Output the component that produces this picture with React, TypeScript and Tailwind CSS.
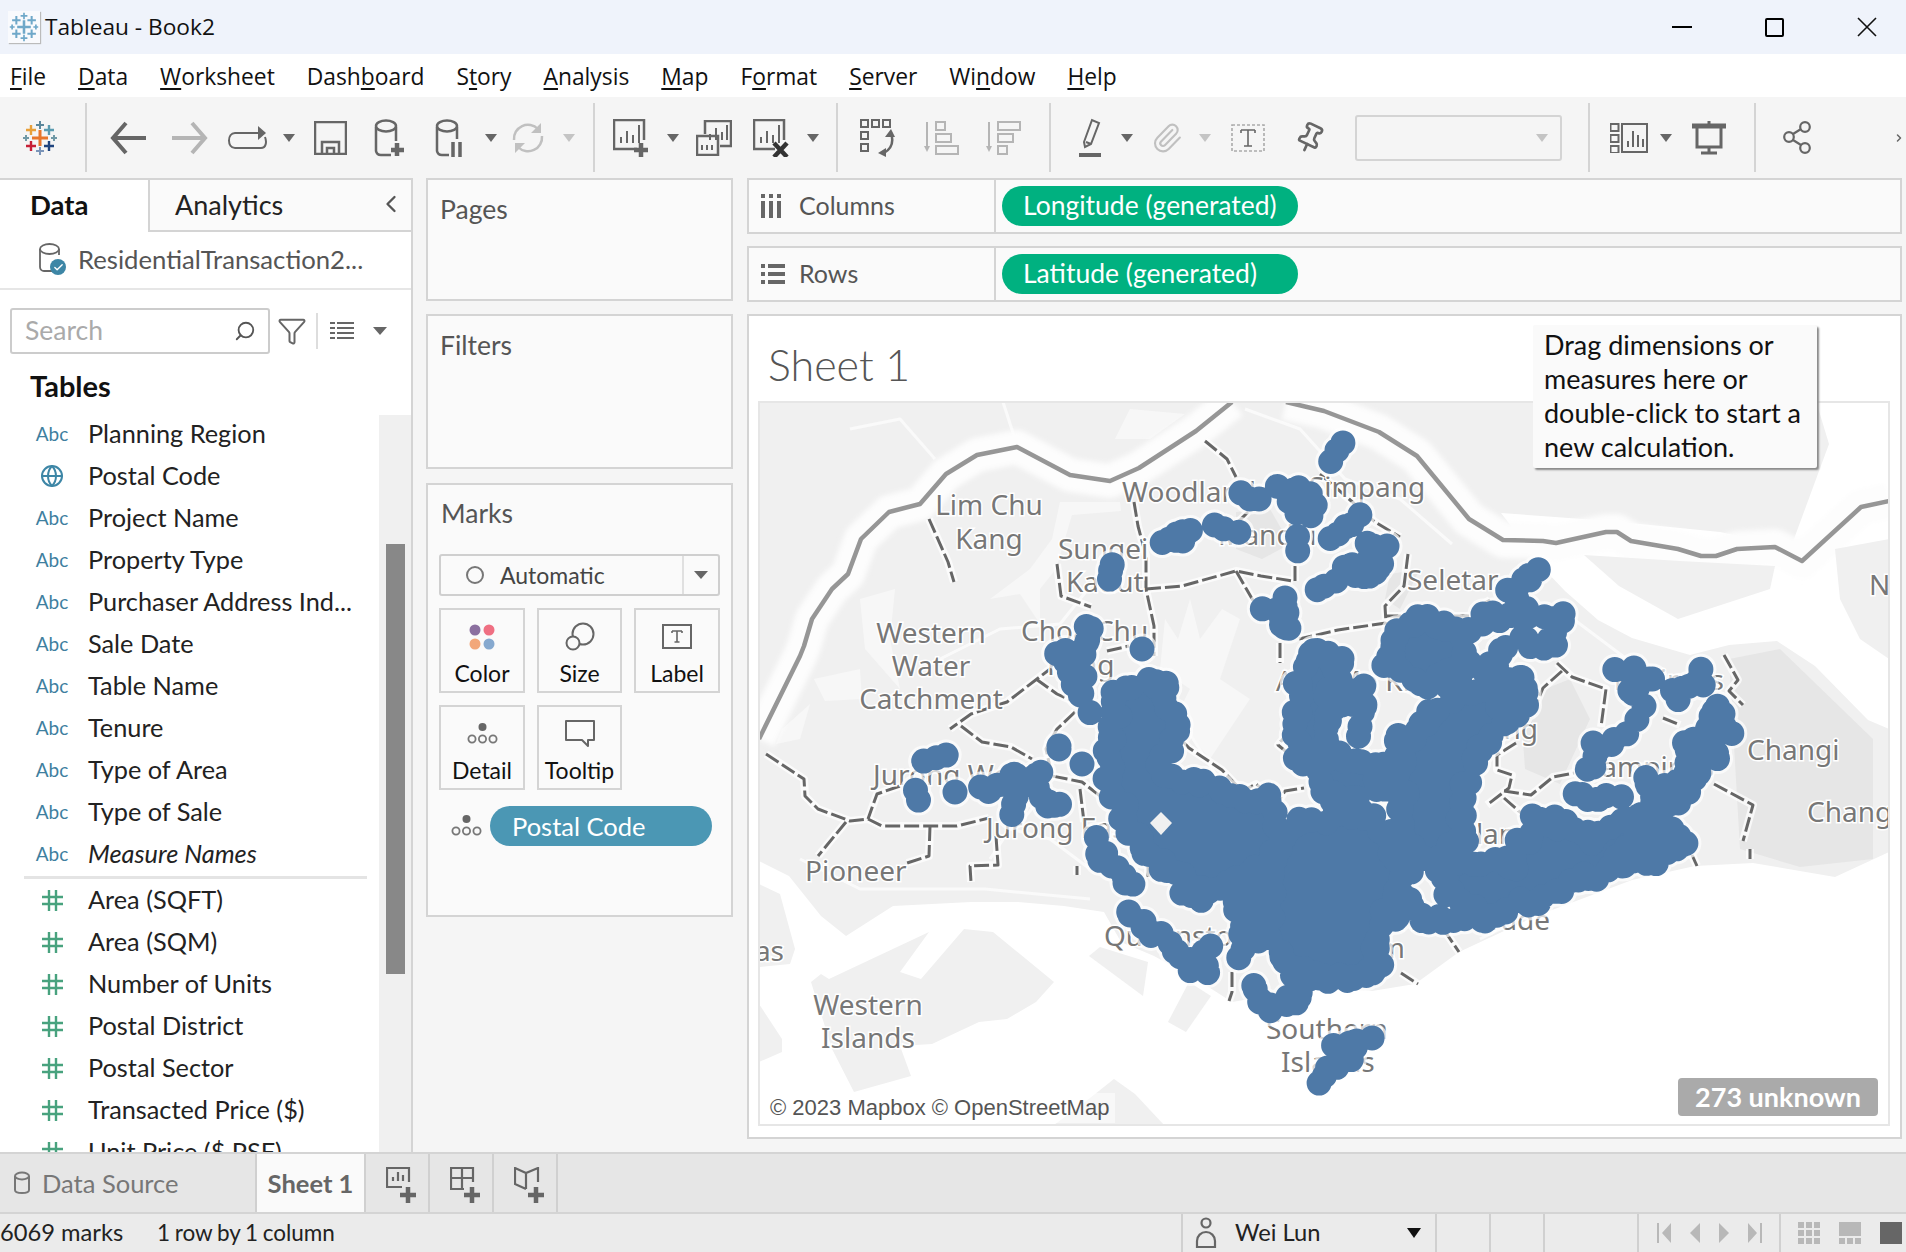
// App.tsx - Tableau desktop worksheet with a Singapore map
import type { ReactNode } from "react";
import { Search, Filter, Globe, ChevronLeft, ChevronRight, Pin, Paperclip, Check } from "lucide-react";

type Pt = [number, number];
const toD = (p: number[][], close = false) =>
    "M" + p.map((q) => q.join(" ")).join(" L") + (close ? " Z" : "");

const ui = "font-['Lato','Liberation_Sans',sans-serif]";
const win = "font-['Open_Sans','Liberation_Sans',sans-serif]";

// ---------- map data, in page pixels ----------
const border: Pt[] = [
    [759, 740], [800, 657], [804, 647], [812, 620], [832, 590], [848, 575], [861, 540], [889, 513], [920, 505], [946, 475],
    [977, 456], [1017, 448], [1070, 476], [1110, 482], [1139, 469], [1196, 432], [1232, 403],
];
const border2: Pt[] = [
    [1286, 403], [1324, 412], [1379, 433], [1417, 457], [1469, 520], [1503, 541], [1543, 542], [1556, 544], [1606, 533],
    [1617, 533], [1631, 542], [1678, 550], [1701, 557], [1716, 557], [1737, 550], [1775, 548], [1802, 562], [1861, 508], [1889, 502],
];
const land: Pt[] = [
    [758, 402], [1816, 402], [1829, 445], [1791, 548], [1720, 533], [1610, 522], [1501, 514], [1545, 571], [1565, 592], [1598, 621],
    [1632, 639], [1690, 656], [1729, 646], [1777, 642], [1815, 667], [1868, 721], [1889, 730], [1889, 853], [1835, 878], [1753, 864],
    [1695, 867], [1632, 881], [1536, 917], [1459, 953], [1415, 985], [1372, 992], [1314, 989], [1232, 1003], [1196, 980], [1154, 957],
    [1121, 943], [1104, 913], [1064, 907], [1018, 903], [971, 903], [893, 907], [846, 937], [821, 917], [789, 877], [759, 862],
];
const islands: Pt[][] = [
    [[759, 885], [780, 895], [795, 950], [790, 965], [759, 968]],
    [[811, 983], [821, 975], [829, 980], [929, 933], [900, 973], [921, 980], [964, 930], [993, 933], [1054, 983], [1036, 1003], [1007, 1020], [979, 1023], [932, 1045], [900, 1047], [911, 1077], [854, 1093], [832, 1050]],
    [[759, 1005], [782, 1040], [782, 1053], [759, 1063]],
    [[1089, 957], [1100, 948], [1148, 963], [1143, 997]],
    [[1168, 1023], [1189, 983], [1211, 997], [1186, 1033]],
    [[1054, 1126], [1085, 1103], [1114, 1080], [1135, 1095], [1164, 1126]],
    [[1584, 556], [1680, 562], [1775, 567], [1770, 590], [1678, 620], [1619, 587]],
    [[1835, 550], [1889, 540], [1889, 660], [1860, 640], [1840, 600]],
];
const darker: Pt[][] = [
    [[1729, 660], [1780, 650], [1873, 740], [1873, 860], [1800, 868], [1740, 850]],
    [[1520, 700], [1570, 680], [1590, 720], [1560, 785], [1525, 770]],
    [[1236, 513], [1270, 510], [1290, 545], [1262, 560], [1236, 550]],
    [[1390, 575], [1420, 570], [1400, 610], [1385, 600]],
];
const bright: Pt[][] = [
    [[1060, 503], [1120, 503], [1121, 512], [1072, 516], [1056, 570], [1040, 590], [1040, 625], [1020, 595], [990, 600], [1030, 570], [1052, 540]],
    [[814, 680], [860, 670], [862, 700], [825, 702]],
    [[782, 730], [810, 705], [800, 740], [776, 745]],
    [[1165, 620], [1178, 640], [1190, 600], [1200, 640], [1222, 610], [1240, 620], [1220, 680], [1250, 700], [1210, 760], [1175, 720], [1190, 690], [1160, 670]],
    [[860, 600], [895, 590], [890, 640], [900, 690], [865, 650]],
    [[1130, 410], [1185, 415], [1150, 440], [1115, 440]],
];
const roads: Pt[][] = [
    [[850, 430], [900, 420], [935, 460]],
    [[1003, 403], [1015, 440]],
    [[940, 660], [1000, 630], [1060, 625], [1100, 575]],
    [[1245, 410], [1300, 430], [1345, 480], [1400, 500], [1452, 545]],
    [[1130, 655], [1155, 680], [1225, 790]],
    [[1015, 830], [1040, 800]],
    [[800, 860], [860, 890], [985, 890], [1090, 900]],
    [[1440, 700], [1560, 610], [1680, 700]],
    [[1480, 940], [1620, 870]],
    [[990, 860], [1010, 830], [1050, 840], [1090, 870]],
];
const bounds: Pt[][] = [
    [[929, 520], [948, 563], [954, 583]],
    [[1205, 442], [1227, 460], [1236, 478]],
    [[1134, 503], [1138, 527], [1146, 557], [1146, 590], [1154, 627], [1154, 657]],
    [[1146, 590], [1182, 587], [1236, 572], [1261, 577], [1293, 582]],
    [[1236, 572], [1254, 603]],
    [[1057, 565], [1061, 597], [1091, 608]],
    [[1107, 652], [1129, 647]],
    [[1054, 667], [1007, 703], [971, 715], [950, 730]],
    [[1036, 680], [1057, 695], [1075, 703]],
    [[1075, 713], [1057, 730], [1046, 750], [1052, 777], [1082, 783], [1104, 800]],
    [[961, 727], [982, 743], [1011, 748], [1032, 760]],
    [[766, 755], [804, 780], [805, 797], [818, 810], [850, 822], [868, 820], [882, 827], [957, 827], [989, 819]],
    [[900, 787], [877, 795], [868, 820]],
    [[846, 823], [818, 857]],
    [[930, 827], [929, 857], [907, 864]],
    [[996, 837], [998, 866], [970, 867], [971, 883]],
    [[1080, 790], [1084, 823]],
    [[1077, 867], [1077, 876]],
    [[1148, 868], [1148, 878]],
    [[1232, 973], [1232, 993], [1229, 1002]],
    [[1169, 728], [1189, 749], [1222, 771], [1242, 792], [1256, 785], [1278, 803], [1285, 792], [1304, 789]],
    [[1280, 644], [1280, 664]],
    [[1290, 731], [1278, 746], [1290, 756]],
    [[1320, 475], [1349, 500], [1375, 523], [1400, 538]],
    [[1408, 555], [1404, 587], [1385, 607], [1386, 624], [1338, 631], [1299, 640]],
    [[1386, 617], [1430, 617]],
    [[1454, 617], [1478, 617]],
    [[1478, 608], [1490, 601]],
    [[1295, 567], [1295, 582]],
    [[1248, 513], [1236, 525]],
    [[1557, 664], [1572, 678], [1606, 690], [1601, 728]],
    [[1562, 672], [1543, 689], [1531, 717]],
    [[1516, 744], [1497, 756], [1497, 771], [1512, 776], [1509, 789], [1487, 806]],
    [[1504, 792], [1531, 796], [1553, 778], [1574, 774]],
    [[1504, 799], [1521, 814]],
    [[1724, 656], [1738, 681], [1729, 692], [1743, 706]],
    [[1714, 785], [1753, 806], [1743, 842]],
    [[1750, 850], [1750, 860]],
    [[1663, 719], [1680, 726]],
    [[1692, 856], [1697, 867]],
    [[1444, 931], [1459, 953]],
    [[1401, 974], [1418, 985]],
];
// thin groups of dots, each with its own sideways scatter
const markLines: [number, Pt[]][] = [
    [3, [[1240, 495], [1258, 499]]],
    [7, [[1282, 482], [1290, 495], [1305, 490], [1312, 508], [1298, 515], [1290, 495]]],
    [2, [[1341, 444], [1331, 461]]],
    [3, [[1358, 517], [1345, 530], [1329, 541]]],
    [2, [[1298, 538], [1298, 550]]],
    [6, [[1368, 550], [1385, 553], [1378, 565], [1370, 577], [1348, 568], [1368, 560]]],
    [2, [[1316, 590], [1334, 582]]],
    [6, [[1266, 609], [1290, 602], [1285, 618], [1290, 630], [1278, 620]]],
    [1, [[1112, 565], [1110, 580]]],
    [4, [[1161, 542], [1175, 538], [1189, 532], [1184, 543]]],
    [3, [[1216, 527], [1236, 532]]],
    [7, [[1086, 623], [1089, 650], [1062, 660], [1079, 680], [1089, 707]]],
    [0, [[1142, 650], [1142, 650]]],
    [3, [[925, 762], [945, 755]]],
    [1, [[916, 792], [918, 802]]],
    [0, [[955, 793], [955, 793]]],
    [4, [[979, 787], [989, 793], [1011, 777], [1037, 777], [1046, 803], [1061, 803]]],
    [1, [[1016, 797], [1011, 815]]],
    [0, [[1059, 747], [1059, 750]]],
    [0, [[1082, 765], [1082, 765]]],
    [6, [[1100, 843], [1102, 857], [1121, 880], [1136, 887]]],
    [6, [[1129, 913], [1154, 933], [1179, 957], [1204, 970], [1205, 945]]],
    [3, [[1182, 893], [1200, 900]]],
    [4, [[1237, 905], [1244, 931], [1237, 956]]],
    [5, [[1249, 985], [1258, 1003], [1275, 1010], [1295, 999], [1302, 974], [1328, 981], [1357, 981], [1381, 964]]],
    [6, [[1370, 1040], [1340, 1065], [1320, 1085]]],
    [4, [[1337, 1050], [1355, 1045]]],
    [3, [[1362, 689], [1343, 703], [1365, 706], [1357, 735]]],
    [6, [[1540, 571], [1526, 581], [1509, 592], [1521, 614], [1487, 621], [1560, 617], [1550, 646], [1521, 644], [1502, 656], [1483, 678], [1521, 674], [1524, 696], [1497, 714]]],
    [9, [[1618, 674], [1647, 674], [1632, 696], [1642, 714]]],
    [8, [[1676, 685], [1697, 678], [1683, 703]]],
    [4, [[1572, 796], [1598, 801], [1618, 796]]],
    [5, [[1589, 774], [1598, 746], [1627, 735]]],
    [0, [[1596, 835], [1596, 835]]],
    [5, [[1391, 924], [1405, 899], [1420, 917], [1439, 921], [1478, 917]]],
    [4, [[1716, 710], [1731, 735]]],
];
const markFills: Pt[][] = [
    [[1118, 693], [1161, 681], [1173, 729], [1161, 778], [1216, 790], [1264, 802], [1285, 831], [1270, 881], [1264, 907], [1264, 937], [1250, 873], [1216, 893], [1167, 875], [1137, 839], [1106, 778]],
    [[1285, 831], [1357, 810], [1386, 835], [1410, 874], [1386, 917], [1377, 964], [1328, 985], [1290, 971], [1266, 935], [1270, 881]],
    [[1319, 650], [1340, 665], [1330, 705], [1322, 754], [1380, 766], [1380, 790], [1337, 802], [1301, 754], [1298, 681]],
    [[1422, 620], [1465, 632], [1465, 669], [1422, 687], [1388, 662], [1388, 644]],
    [[1422, 725], [1453, 693], [1520, 687], [1526, 705], [1477, 754], [1459, 802], [1465, 839], [1434, 863], [1410, 851], [1402, 790], [1402, 742]],
    [[1439, 867], [1512, 864], [1536, 821], [1560, 824], [1594, 839], [1646, 814], [1680, 846], [1656, 856], [1584, 881], [1526, 903], [1487, 917], [1449, 899]],
    [[1651, 781], [1676, 789], [1695, 771], [1685, 749], [1700, 735], [1716, 710], [1714, 756], [1680, 799], [1651, 817]],
    [[1660, 825], [1680, 846], [1650, 865], [1620, 855]],
];
const labels: [string, number, number, ("start" | "middle" | "end")?][] = [
    ["Lim Chu", 989, 513, "middle"], ["Kang", 989, 547, "middle"],
    ["Western", 931, 641, "middle"], ["Water", 931, 674, "middle"], ["Catchment", 931, 707, "middle"],
    ["Woodlands", 1122, 500], ["Mandai", 1218, 543], ["Sungei", 1058, 557], ["Kadut", 1066, 590],
    ["Choa Chu", 1021, 639], ["Kang", 1047, 673], ["Simpang", 1309, 495], ["Seletar", 1407, 588], ["N", 1869, 593],
    ["Jurong West", 873, 783], ["Jurong East", 986, 836], ["Pioneer", 805, 879], ["Tuas", 784, 959, "end"],
    ["Western", 868, 1013, "middle"], ["Islands", 868, 1046, "middle"], ["Queenstown", 1104, 944],
    ["Southern", 1266, 1037], ["Islands", 1281, 1070], ["Changi", 1747, 758], ["Changi", 1807, 820],
    ["Tampines", 1588, 775], ["Bedok", 1562, 837], ["Geylang", 1426, 842], ["Marine Parade", 1550, 928, "end"],
    ["Hougang", 1538, 737, "end"], ["Ang Mo Kio", 1276, 689], ["Novena", 1295, 835], ["Outram", 1405, 956, "end"],
    ["Pasir Ris", 1724, 688, "end"],
];

// scatter dots along the traced lines so the outline comes out lumpy like real marks
function dotsPath() {
    let seed = 12345;
    const rnd = () => {
        seed = (seed * 1103515245 + 12345) & 0x7fffffff;
        return seed / 0x7fffffff;
    };
    const R = 12.5;
    const dot = (x: number, y: number) =>
        `M${(x - R).toFixed(1)} ${y.toFixed(1)}a${R} ${R} 0 1 0 ${2 * R} 0a${R} ${R} 0 1 0 ${-2 * R} 0`;
    const out: string[] = [];
    const along = (line: Pt[], scatter: number) => {
        for (let i = 0; i < line.length - 1; i++) {
            const [ax, ay] = line[i];
            const [bx, by] = line[i + 1];
            const len = Math.hypot(bx - ax, by - ay);
            const n = Math.max(1, Math.round(len / 9));
            for (let k = 0; k <= n; k++) {
                const t = k / n;
                const dx = (rnd() - 0.5) * 2 * scatter;
                const dy = (rnd() - 0.5) * 2 * scatter;
                out.push(dot(ax + (bx - ax) * t + dx, ay + (by - ay) * t + dy));
            }
        }
    };
    markLines.forEach(([s, l]) => along(l, s));
    markFills.forEach((l) => along([...l, l[0]], 6));
    return out.join("");
}
const fillPath = markFills.map((l) => toD(l, true)).join(" ");
const dots = dotsPath();

function MapChart() {
    return (
        <svg viewBox="760 404 1128 721" className="block h-full w-full">
            <defs>
                <filter id="soft" x="-5%" y="-5%" width="110%" height="110%">
                    <feGaussianBlur stdDeviation="2.5" />
                </filter>
            </defs>
            <rect x="759" y="403" width="1130" height="723" fill="#ffffff" />
            <path d={toD(land, true)} fill="#f0f0f0" />
            {darker.map((p, i) => <path key={i} d={toD(p, true)} fill="#e6e6e6" />)}
            {bright.map((p, i) => <path key={i} d={toD(p, true)} fill="#f7f7f7" />)}
            <g fill="none" strokeLinejoin="round">
                {roads.map((p, i) => <path key={i} d={toD(p)} stroke="#fafafa" strokeWidth="3" />)}
                <g filter="url(#soft)">
                    <path d={toD(border)} stroke="#fdfdfd" strokeWidth="34" />
                    <path d={toD(border2)} stroke="#fdfdfd" strokeWidth="36" />
                </g>
            </g>
            {islands.map((p, i) => <path key={i} d={toD(p, true)} fill="#f0f0f0" />)}
            <g fill="none" stroke="#969696" strokeWidth="4.5" strokeLinejoin="round">
                <path d={toD(border)} />
                <path d={toD(border2)} />
            </g>
            <g fill="none" strokeLinejoin="round">
                {bounds.map((p, i) => <path key={i} d={toD(p)} stroke="#ffffff" strokeOpacity="0.7" strokeWidth="8" />)}
                {bounds.map((p, i) => <path key={i} d={toD(p)} stroke="#666666" strokeWidth="3" strokeDasharray="15 4" />)}
            </g>
            <g fontFamily="'Noto Sans','Open Sans',sans-serif" fontSize="28" fill="#777777" stroke="#ffffff" strokeWidth="3" paintOrder="stroke">
                {labels.map(([t, x, y, a], i) => <text key={i} x={x} y={y + 3} textAnchor={a ?? "start"}>{t}</text>)}
            </g>
            <g opacity="0.7">
                <path d={dots} fill="#ffffff" stroke="#ffffff" strokeWidth="6" />
                <path d={fillPath} fill="#ffffff" />
            </g>
            <path d={fillPath} fill="#4e79a7" />
            <path d={dots} fill="#4e79a7" />
            <path d="M1161 813 L1172 824 L1161 836 L1150 824 Z" fill="#f0f0f0" />
        </svg>
    );
}

// ---------- toolbar icons ----------
function Tb({ children, className }: { children?: ReactNode; className: string }) {
    return <div className={`flex shrink-0 items-center justify-center ${className}`}>{children}</div>;
}
function Caret({ light }: { light?: boolean }) {
    return (
        <svg width="12" height="8" viewBox="0 0 12 8" className="shrink-0">
            <path d="M0 0h12L6 8z" fill={light ? "#c4c4c4" : "#666666"} />
        </svg>
    );
}
function Sep() {
    return <div className="h-[69px] w-[2px] shrink-0 bg-[#d4d4d4]" />;
}
function Ic({ children, w = 44, h = 44, c = "#666666", sw = 2.5 }: { children: ReactNode; w?: number; h?: number; c?: string; sw?: number }) {
    return (
        <svg width={w} height={h} viewBox={`0 0 ${w} ${h}`} fill="none" stroke={c} strokeWidth={sw} className="shrink-0">
            {children}
        </svg>
    );
}
function BarsIn() {
    return <path d="M8 24v-6M14 24V12M20 24v-8M26 24V6" strokeWidth="2" />;
}
function TableauLogo({ pale }: { pale?: boolean }) {
    const p = (x: number, y: number, r: number, c: string, w: number) => (
        <path d={`M${x - r} ${y}h${2 * r}M${x} ${y - r}v${2 * r}`} stroke={pale ? "#6fa8c9" : c} strokeWidth={w} />
    );
    return (
        <svg width="34" height="34" viewBox="0 0 34 34" className="shrink-0">
            {p(17, 17, 8, "#e8762b", 3)}
            {p(17, 4, 4, "#5b879b", 2)}
            {p(8, 9, 5, "#e8a03a", 2.4)}
            {p(26, 9, 5, "#5a9bb0", 2.4)}
            {p(3, 17, 3, "#7099a6", 2)}
            {p(31, 17, 3, "#7099a6", 2)}
            {p(8, 25, 5, "#c72037", 2.4)}
            {p(26, 25, 5, "#1f447e", 2.4)}
            {p(17, 30, 4, "#7a94b8", 2)}
        </svg>
    );
}
function DetailDots({ w = 31 }: { w?: number }) {
    return (
        <svg width={w} height="24" viewBox="0 0 31 24" fill="none" stroke="#777777" strokeWidth="1.8" className="shrink-0">
            <circle cx="15.5" cy="5" r="4" fill="#666666" stroke="none" />
            <circle cx="5" cy="17" r="3.6" />
            <circle cx="15.5" cy="17" r="3.6" />
            <circle cx="26" cy="17" r="3.6" />
        </svg>
    );
}

function Toolbar() {
    return (
        <div className="flex h-[81px] shrink-0 items-center bg-[#f5f5f5]">
            <Tb className="w-[80px]"><TableauLogo /></Tb>
            <div className="w-[5px] shrink-0" />
            <Sep />
            <Tb className="w-[82px]">
                <Ic w={38} h={34} sw={4}><path d="M37 17H5M17 2L4 17l13 15" /></Ic>
            </Tb>
            <Tb className="w-[42px]">
                <Ic w={38} h={34} sw={4} c="#b5b5b5"><path d="M1 17h32M21 2l13 15-13 15" /></Ic>
            </Tb>
            <Tb className="w-[74px]">
                <Ic w={42} h={26} sw={2}><path d="M33 8H8c-8 0-8 15 0 15h26c5 0 6-6 4-11" /><path d="M31 1l8 7-8 7z" fill="#666666" stroke="none" /></Ic>
            </Tb>
            <Tb className="w-[8px]"><Caret /></Tb>
            <Tb className="w-[74px]">
                <Ic w={33} h={34}><path d="M1 1h31v32H1zM8 33V21h17v12M13 33v-6h7v6" /></Ic>
            </Tb>
            <Tb className="w-[46px]">
                <Ic w={32} h={38}><path d="M2 8v24a5 5 0 0 0 5 4h10M22 8v14" /><ellipse cx="12" cy="7" rx="10" ry="5.5" /><path d="M23 24v13M17 31h13" strokeWidth="4.5" /></Ic>
            </Tb>
            <Tb className="w-[74px]">
                <Ic w={30} h={38}><path d="M2 8v24a5 5 0 0 0 5 4h7M22 8v12" /><ellipse cx="12" cy="7" rx="10" ry="5.5" /><path d="M18 23v15M25 23v15" strokeWidth="3.5" /></Ic>
            </Tb>
            <Tb className="w-[8px]"><Caret /></Tb>
            <Tb className="w-[66px]">
                <Ic w={34} h={36} c="#c0c0c0"><path d="M3 20a14 14 0 0 1 24-11M31 16a14 14 0 0 1-24 11" /><path d="M30 3v10H20M4 33V23h10" fill="#c0c0c0" stroke="none" /></Ic>
            </Tb>
            <Tb className="w-[16px]"><Caret light /></Tb>
            <div className="w-[16px] shrink-0" />
            <Sep />
            <Tb className="w-[74px]">
                <Ic w={38} h={38}><path d="M24 30H1V1h30v20" /><BarsIn /><path d="M28 24v14M21 31h14" strokeWidth="4.5" /></Ic>
            </Tb>
            <Tb className="w-[8px]"><Caret /></Tb>
            <Tb className="w-[74px]">
                <Ic w={36} h={36}><path d="M9 14V1h26v25H24" /><path d="M14 20v-6M20 20V8M26 20v-8M31 20V5" strokeWidth="2" /><path d="M1 16h21v19H1z" /><path d="M6 25v5M11 25v5M16 25v5" strokeWidth="2" /></Ic>
            </Tb>
            <Tb className="w-[42px]">
                <Ic w={38} h={38}><path d="M22 30H1V1h30v20" /><BarsIn /><path d="M21 24l13 14M34 24L21 38" strokeWidth="4.5" stroke="#333333" /></Ic>
            </Tb>
            <Tb className="w-[40px]"><Caret /></Tb>
            <div className="w-[3px] shrink-0" />
            <Sep />
            <Tb className="w-[80px]">
                <Ic w={36} h={38} sw={2}>
                    <path d="M1 1h7v7H1zM12 1h7v7h-7zM23 1h7v7h-7zM1 13h7v7H1zM1 25h7v7H1z" />
                    <path d="M31 14c3 9 0 16-7 20" strokeWidth="2.5" /><path d="M25 18l6-8 4 8zM18 34l8-5 0 9z" fill="#666666" stroke="none" />
                </Ic>
            </Tb>
            <Tb className="w-[48px]">
                <Ic w={36} h={36} c="#b5b5b5" sw={2}><path d="M3 2v28" /><path d="M0 26l3 6 3-6z" fill="#b5b5b5" stroke="none" /><path d="M12 2h9v8h-9zM12 14h15v8H12zM12 26h22v8H12z" /></Ic>
            </Tb>
            <Tb className="w-[76px]">
                <Ic w={36} h={36} c="#b5b5b5" sw={2}><path d="M3 2v28" /><path d="M0 26l3 6 3-6z" fill="#b5b5b5" stroke="none" /><path d="M12 2h22v8H12zM12 14h15v8H12zM12 26h9v8h-9z" /></Ic>
            </Tb>
            <div className="w-[7px] shrink-0" />
            <Sep />
            <Tb className="w-[70px] pl-[10px]">
                <Ic w={26} h={40} sw={2}><path d="M6 24L14 2l7 3-8 21-6 3zM8 24l5 2" /><path d="M1 37h22" strokeWidth="4" /></Ic>
            </Tb>
            <Tb className="w-[12px]"><Caret /></Tb>
            <Tb className="w-[68px]"><Paperclip size={32} color="#c0c0c0" strokeWidth={1.6} /></Tb>
            <Tb className="w-[8px]"><Caret light /></Tb>
            <Tb className="w-[78px]">
                <svg width="34" height="28" viewBox="0 0 34 28" fill="none" className="shrink-0">
                    <rect x="1" y="1" width="32" height="26" stroke="#aaaaaa" strokeWidth="1.6" strokeDasharray="3 2" />
                    <path d="M10 6h14M17 6v16M13 22h8M10 6v3M24 6v3" stroke="#666666" strokeWidth="1.6" />
                </svg>
            </Tb>
            <Tb className="w-[46px]"><Pin size={32} color="#666666" strokeWidth={2} className="rotate-[25deg]" /></Tb>
            <div className="ml-[22px] flex h-[46px] w-[207px] shrink-0 items-center justify-end rounded-[3px] border-2 border-[#d4d4d4] pr-[12px]">
                <Caret light />
            </div>
            <div className="w-[26px] shrink-0" />
            <Sep />
            <Tb className="w-[68px] pl-[10px]">
                <Ic w={38} h={30} sw={2}><path d="M0.5 1h8v7h-8zM0.5 12h8v7h-8zM0.5 23h8v7h-8zM12 1h25v28H12z" /><path d="M18 24v-6M23 24V8M28 24V12M33 24v-8" strokeWidth="2" /></Ic>
            </Tb>
            <Tb className="w-[16px]"><Caret /></Tb>
            <Tb className="w-[70px]">
                <Ic w={34} h={34} sw={3}><path d="M0 5h34" strokeWidth="5" /><path d="M5 7v19h24V7M17 0v5M17 26v7M9 32h16" /></Ic>
            </Tb>
            <div className="w-[10px] shrink-0" />
            <Sep />
            <Tb className="w-[82px]">
                <Ic w={28} h={33} sw={2.2}>
                    <circle cx="22" cy="6" r="4.8" /><circle cx="6" cy="16" r="4.8" /><circle cx="22" cy="27" r="4.8" />
                    <path d="M10 13l8-5M10 19l8 5" />
                </Ic>
            </Tb>
            <Tb className="ml-[55px] w-[12px]"><ChevronRight size={16} color="#666666" strokeWidth={3} /></Tb>
        </div>
    );
}

// ---------- data pane ----------
const dims = ["Planning Region", "Postal Code", "Project Name", "Property Type", "Purchaser Address Ind...", "Sale Date", "Table Name", "Tenure", "Type of Area", "Type of Sale", "Measure Names"];
const meas = ["Area (SQFT)", "Area (SQM)", "Number of Units", "Postal District", "Postal Sector", "Transacted Price ($)", "Unit Price ($ PSF)"];

function FieldRow({ icon, name, italic }: { icon: ReactNode; name: string; italic?: boolean }) {
    return (
        <div className="flex h-[42px] shrink-0 items-center">
            <div className="flex w-[88px] shrink-0 justify-center pl-[20px] pr-[4px]">{icon}</div>
            <span className={`whitespace-nowrap text-[25.3px] text-[#222222] ${italic ? "italic" : ""}`}>{name}</span>
        </div>
    );
}
function Hash() {
    return (
        <svg width="21" height="21" viewBox="0 0 21 21" stroke="#48a27e" strokeWidth="2.4" className="shrink-0">
            <path d="M7 0v21M14 0v21M0 7h21M0 14h21" />
        </svg>
    );
}

function DataPane() {
    return (
        <div className="flex h-full w-[413px] shrink-0 flex-col overflow-hidden border-r-2 border-t-2 border-[#d4d4d4] bg-white">
            <div className="flex h-[52px] shrink-0">
                <div className="w-[148px] pl-[30px] pt-[4px] text-[27.5px] font-bold text-[#111111]">Data</div>
                <div className="flex flex-1 items-center justify-between border-b-2 border-l-2 border-[#d4d4d4] bg-[#fafafa] pl-[25px] pr-[6px]">
                    <span className="text-[27px] text-[#222222]">Analytics</span>
                    <ChevronLeft size={28} color="#555555" strokeWidth={2} className="mb-[3px]" />
                </div>
            </div>
            <div className="flex h-[58px] shrink-0 items-center border-b-2 border-[#e6e6e6] pb-[2px] pl-[38px]">
                <div className="relative mr-[12px] h-[32px] w-[28px] shrink-0">
                    <svg width="24" height="30" viewBox="0 0 24 30" fill="none" stroke="#666666" strokeWidth="1.8">
                        <path d="M2 6v18a4 4 0 0 0 4 4h8M21 6v6" />
                        <ellipse cx="11.5" cy="6" rx="9.5" ry="5" />
                    </svg>
                    <div className="absolute bottom-0 right-0 flex h-[16px] w-[16px] items-center justify-center rounded-full bg-[#3d86a6]">
                        <Check size={11} color="#ffffff" strokeWidth={3} />
                    </div>
                </div>
                <span className="whitespace-nowrap text-[25.7px] text-[#555555]">ResidentialTransaction2...</span>
            </div>
            <div className="flex h-[82px] shrink-0 items-center pl-[10px]">
                <div className="flex h-[46px] w-[260px] shrink-0 items-center justify-between rounded-[3px] border-2 border-[#cccccc] pl-[13px] pr-[12px]">
                    <span className="text-[26.5px] text-[#aaaaaa]">Search</span>
                    <Search size={22} color="#555555" strokeWidth={2} className="-scale-x-100" />
                </div>
                <Filter size={30} color="#666666" strokeWidth={1.6} className="ml-[7px] shrink-0" />
                <div className="ml-[9px] h-[36px] w-[2px] shrink-0 bg-[#dddddd]" />
                <svg width="24" height="18" viewBox="0 0 24 18" fill="#666666" className="ml-[12px] shrink-0">
                    <path d="M0 0h5v2H0zM7 0h17v2H7zM0 5h5v2H0zM7 5h17v2H7zM0 10h5v2H0zM7 10h17v2H7zM0 15h5v2H0zM7 15h17v2H7z" />
                </svg>
                <svg width="14" height="8" viewBox="0 0 14 8" className="ml-[19px] shrink-0"><path d="M0 0h14L7 8z" fill="#666666" /></svg>
            </div>
            <div className="flex min-h-0 flex-1">
                <div className="min-w-0 flex-1 overflow-hidden">
                    <div className="h-[41px] pl-[30px] text-[29px] font-bold leading-[28px] text-[#111111]">Tables</div>
                    {dims.map((n) => (
                        <FieldRow
                            key={n}
                            name={n}
                            italic={n === "Measure Names"}
                            icon={n === "Postal Code"
                                ? <Globe size={24} color="#3d86a6" strokeWidth={2} className="shrink-0" />
                                : <span className="text-[19px] text-[#3f7f9f]">Abc</span>}
                        />
                    ))}
                    <div className="ml-[24px] mr-[12px] mt-[1px] h-[3px] bg-[#e4e4e4]" />
                    {meas.map((n) => <FieldRow key={n} name={n} icon={<Hash />} />)}
                </div>
                <div className="mt-[43px] flex w-[32px] shrink-0 flex-col items-center bg-[#f0f0f0] pt-[129px]">
                    <div className="h-[430px] w-[19px] bg-[#888888]" />
                </div>
            </div>
        </div>
    );
}

// ---------- cards column ----------
function MarkBtn({ label, children }: { label: string; children: ReactNode }) {
    return (
        <div className="flex h-[85px] w-full flex-col items-center border-2 border-[#d4d4d4]">
            <div className="flex h-[48px] items-center justify-center pt-[6px]">{children}</div>
            <span className="whitespace-nowrap text-[23px] leading-[30px] text-[#111111]">{label}</span>
        </div>
    );
}

function CardsColumn() {
    return (
        <div className="ml-[13px] flex w-[307px] shrink-0 flex-col gap-[13px] text-[26.5px] leading-[34px] text-[#555555]">
            <div className="h-[123px] border-2 border-[#d4d4d4] bg-[#fafafa] pl-[12px] pt-[12px]">Pages</div>
            <div className="h-[155px] border-2 border-[#d4d4d4] bg-[#fafafa] pl-[12px] pt-[12px]">Filters</div>
            <div className="mt-[1px] h-[434px] border-2 border-[#d4d4d4] bg-[#fafafa] pl-[11px] pt-[11px]">
                <div className="pl-[2px]">Marks</div>
                <div className="mt-[24px] flex h-[42px] w-[281px] items-center rounded-[3px] border-2 border-[#cfcfcf]">
                    <div className="ml-[25px] h-[18px] w-[18px] shrink-0 rounded-full border-2 border-[#777777]" />
                    <span className="ml-[16px] flex-1 text-[23px] text-[#444444]">Automatic</span>
                    <div className="flex h-full w-[36px] items-center justify-center border-l-2 border-[#e0e0e0]">
                        <svg width="14" height="8" viewBox="0 0 14 8"><path d="M0 0h14L7 8z" fill="#666666" /></svg>
                    </div>
                </div>
                <div className="mt-[12px] grid w-[281px] grid-cols-[86px_85px_86px] gap-x-[12px] gap-y-[12px]">
                    <MarkBtn label="Color">
                        <svg width="26" height="26" viewBox="0 0 26 26">
                            <circle cx="6" cy="6" r="5.5" fill="#8b6f9f" /><circle cx="20" cy="6" r="5.5" fill="#ef6f82" />
                            <circle cx="6" cy="20" r="5.5" fill="#f2a77a" /><circle cx="20" cy="20" r="5.5" fill="#86a9cf" />
                        </svg>
                    </MarkBtn>
                    <MarkBtn label="Size">
                        <svg width="30" height="30" viewBox="0 0 30 30" fill="none" stroke="#666666" strokeWidth="2">
                            <circle cx="18" cy="12" r="10.5" /><circle cx="8" cy="21" r="6.5" fill="#fafafa" />
                        </svg>
                    </MarkBtn>
                    <MarkBtn label="Label">
                        <svg width="30" height="26" viewBox="0 0 30 26" fill="none" stroke="#666666" strokeWidth="2">
                            <rect x="1" y="1" width="28" height="23" />
                            <path d="M10 7h10M15 7v11M12.5 18h5M10 7v2M20 7v2" strokeWidth="1.6" />
                        </svg>
                    </MarkBtn>
                    <MarkBtn label="Detail"><DetailDots /></MarkBtn>
                    <MarkBtn label="Tooltip">
                        <svg width="30" height="28" viewBox="0 0 30 28" fill="none" stroke="#666666" strokeWidth="2">
                            <path d="M1 1h28v19h-6v6l-6-6H1z" strokeLinejoin="round" />
                        </svg>
                    </MarkBtn>
                </div>
                <div className="mt-[16px] flex items-center">
                    <div className="w-[51px] shrink-0 pl-[12px]"><DetailDots /></div>
                    <div className="flex h-[40px] w-[222px] items-center rounded-full bg-[#4b97b4] pl-[22px] text-[25.5px] text-white">Postal Code</div>
                </div>
            </div>
        </div>
    );
}

function Shelf({ icon, label, pill }: { icon: ReactNode; label: string; pill: string }) {
    return (
        <div className="flex h-[56px] shrink-0 border-2 border-[#d4d4d4] bg-[#fafafa]">
            <div className="flex w-[247px] shrink-0 items-center border-r-2 border-[#d4d4d4] pl-[12px] text-[25px] text-[#555555]">
                <div className="flex w-[38px] shrink-0 items-center">{icon}</div>
                {label}
            </div>
            <div className="flex items-center pl-[6px]">
                <div className="flex h-[40px] w-[296px] items-center rounded-full bg-[#00b180] pl-[21px] text-[26.5px] text-white">{pill}</div>
            </div>
        </div>
    );
}

function ViewCard() {
    return (
        <div className="relative h-[825px] shrink-0 border-2 border-[#d4d4d4] bg-white">
            <div className="h-[85px] pl-[19px] pt-[22px] text-[43px] font-light leading-[54px] text-[#555555]">Sheet 1</div>
            <div className="relative mx-[9px] h-[725px] w-[1132px] border-2 border-[#e6e6e6]">
                <MapChart />
                <div className="absolute bottom-[1px] left-[4px] bg-white/50 px-[6px] font-['Liberation_Sans',sans-serif] text-[22px] leading-[30px] text-[#555555]">
                    © 2023 Mapbox © OpenStreetMap
                </div>
                <div className="absolute bottom-[8px] right-[10px] flex h-[38px] w-[200px] items-center justify-center rounded-[4px] bg-[#aaaaaa] text-[27px] font-bold text-white">
                    273 unknown
                </div>
            </div>
            <div className="absolute left-[784px] top-[9px] h-[143px] w-[284px] rounded-[2px] bg-[#fafafa] pl-[11px] pt-[3px] text-[27px] leading-[34px] text-[#111111] shadow-[2px_2px_2px_#888888]">
                Drag dimensions or<br />measures here or<br />double-click to start a<br />new calculation.
            </div>
        </div>
    );
}

function TabIcon({ children }: { children: ReactNode }) {
    return (
        <div className="flex w-[64px] shrink-0 items-center justify-center border-r-2 border-[#d0d0d0] pl-[7px] pt-[6px]">
            <svg width="30" height="38" viewBox="0 0 30 38" fill="none" stroke="#666666" strokeWidth="2.2">
                {children}
                <path d="M22 20v16M14 28h16" strokeWidth="4.5" />
            </svg>
        </div>
    );
}

function Status() {
    const cell = "h-full border-l-2 border-[#d0d0d0] shrink-0";
    return (
        <div className="flex h-[40px] shrink-0 items-center border-t-2 border-[#d4d4d4] bg-[#ebebeb] text-[23.7px] text-[#222222]">
            <span className="w-[157px] shrink-0 whitespace-nowrap">6069 marks</span>
            <span className="w-[1024px] shrink-0 whitespace-nowrap text-[22.5px] [word-spacing:-1.1px]">1 row by 1 column</span>
            <div className={`${cell} flex w-[254px] items-center pl-[12px]`}>
                <svg width="22" height="38" viewBox="0 0 22 38" fill="none" stroke="#666666" strokeWidth="2.2" className="shrink-0">
                    <circle cx="11" cy="9" r="4.5" /><path d="M2 33v-6a9 9 0 0 1 18 0v6z" />
                </svg>
                <span className="ml-[18px] flex-1">Wei Lun</span>
                <svg width="14" height="10" viewBox="0 0 14 10" className="mr-[14px]"><path d="M0 0h14L7 10z" fill="#111111" /></svg>
            </div>
            <div className={`${cell} w-[54px]`} />
            <div className={`${cell} w-[54px]`} />
            <div className={`${cell} w-[94px]`} />
            <div className={`${cell} flex w-[142px] items-center justify-around px-[8px]`}>
                <svg width="14" height="20" viewBox="0 0 14 20" fill="#b8b8b8"><path d="M0 0h2v20H0zM14 0v20L5 10z" /></svg>
                <svg width="10" height="20" viewBox="0 0 10 20" fill="#b8b8b8"><path d="M10 0v20L0 10z" /></svg>
                <svg width="10" height="20" viewBox="0 0 10 20" fill="#b8b8b8"><path d="M0 0v20l10-10z" /></svg>
                <svg width="14" height="20" viewBox="0 0 14 20" fill="#b8b8b8"><path d="M12 0h2v20h-2zM0 0v20l9-10z" /></svg>
            </div>
            <div className={`${cell} flex flex-1 items-center gap-[19px] pl-[17px]`}>
                <svg width="22" height="22" viewBox="0 0 22 22" fill="#b8b8b8"><path d="M0 0h6v6H0zM8 0h6v6H8zM16 0h6v6h-6zM0 8h6v6H0zM8 8h6v6H8zM16 8h6v6h-6zM0 16h6v6H0zM8 16h6v6H8zM16 16h6v6h-6z" /></svg>
                <svg width="22" height="22" viewBox="0 0 22 22" fill="#b8b8b8"><path d="M0 0h22v14H0zM0 16h6v6H0zM8 16h6v6H8zM16 16h6v6h-6z" /></svg>
                <div className="h-[22px] w-[22px] shrink-0 bg-[#666666]" />
            </div>
        </div>
    );
}

export default function App() {
    const menus: [string, string, string][] = [
        ["", "F", "ile"], ["", "D", "ata"], ["", "W", "orksheet"], ["Dash", "b", "oard"], ["S", "t", "ory"], ["", "A", "nalysis"],
        ["", "M", "ap"], ["F", "o", "rmat"], ["", "S", "erver"], ["Wi", "n", "dow"], ["", "H", "elp"],
    ];
    return (
        <div className={`flex h-[1252px] w-[1906px] flex-col overflow-hidden bg-[#f5f5f5] ${ui}`}>
            <div className={`flex h-[54px] shrink-0 items-center bg-[#eff3fb] ${win}`}>
                <div className="ml-[8px] flex h-[32px] w-[32px] items-center justify-center bg-white/60 shadow-[1px_1px_1px_#bbbbbb]">
                    <div className="scale-[0.85]"><TableauLogo pale /></div>
                </div>
                <span className="ml-[5px] flex-1 text-[22.7px] text-[#111111]">Tableau - Book2</span>
                <div className="h-[2px] w-[20px] shrink-0 bg-black" />
                <div className="ml-[73px] h-[19px] w-[19px] shrink-0 rounded-[2px] border-2 border-black" />
                <svg width="20" height="20" viewBox="0 0 20 20" stroke="#111111" strokeWidth="1.6" className="ml-[73px] mr-[29px] shrink-0"><path d="M1 1l18 18M19 1L1 19" /></svg>
            </div>
            <div className={`flex h-[43px] shrink-0 items-center gap-[32px] bg-white pl-[10px] pt-[3px] text-[22.8px] text-[#111111] ${win}`}>
                {menus.map(([a, b, c]) => (
                    <span key={a + b + c} className="whitespace-nowrap">
                        {a}<span className="underline underline-offset-[3px]">{b}</span>{c}
                    </span>
                ))}
            </div>
            <Toolbar />
            <div className="flex min-h-0 flex-1">
                <DataPane />
                <CardsColumn />
                <div className="ml-[14px] flex w-[1155px] shrink-0 flex-col gap-[12px]">
                    <Shelf
                        label="Columns"
                        pill="Longitude (generated)"
                        icon={<svg width="20" height="24" viewBox="0 0 20 24" fill="#666666"><path d="M0 7h4v17H0zM8 7h4v17H8zM16 7h4v17h-4zM0 0h4v4H0zM8 0h4v4H8zM16 0h4v4h-4z" /></svg>}
                    />
                    <Shelf
                        label="Rows"
                        pill="Latitude (generated)"
                        icon={<svg width="24" height="20" viewBox="0 0 24 20" fill="#666666"><path d="M0 0h4v4H0zM7 0h17v4H7zM0 8h4v4H0zM7 8h17v4H7zM0 16h4v4H0zM7 16h17v4H7z" /></svg>}
                    />
                    <ViewCard />
                </div>
            </div>
            <div className="flex h-[60px] shrink-0 border-t-2 border-[#d4d4d4] bg-[#e6e6e6]">
                <div className="flex w-[255px] shrink-0 items-center pl-[14px] text-[25.5px] text-[#777777]">
                    <svg width="16" height="24" viewBox="0 0 16 24" fill="none" stroke="#777777" strokeWidth="2" className="mr-[12px] shrink-0">
                        <path d="M1 5v14c0 4 14 4 14 0V5" /><ellipse cx="8" cy="5" rx="7" ry="3.5" />
                    </svg>
                    Data Source
                </div>
                <div className="flex w-[111px] shrink-0 items-center justify-center border-x-2 border-[#d0d0d0] bg-[#fafafa] text-[25.5px] font-bold text-[#666666]">Sheet 1</div>
                <TabIcon><path d="M16 20H1V1h22v14M7 14v-4M12 14V5M17 14V8" /></TabIcon>
                <TabIcon><path d="M14 22H1V1h22v14M1 11h22M12 1v21" /></TabIcon>
                <TabIcon><path d="M12 22L1 17V1l11 5 12-5v14M12 6v16" /></TabIcon>
            </div>
            <Status />
        </div>
    );
}
